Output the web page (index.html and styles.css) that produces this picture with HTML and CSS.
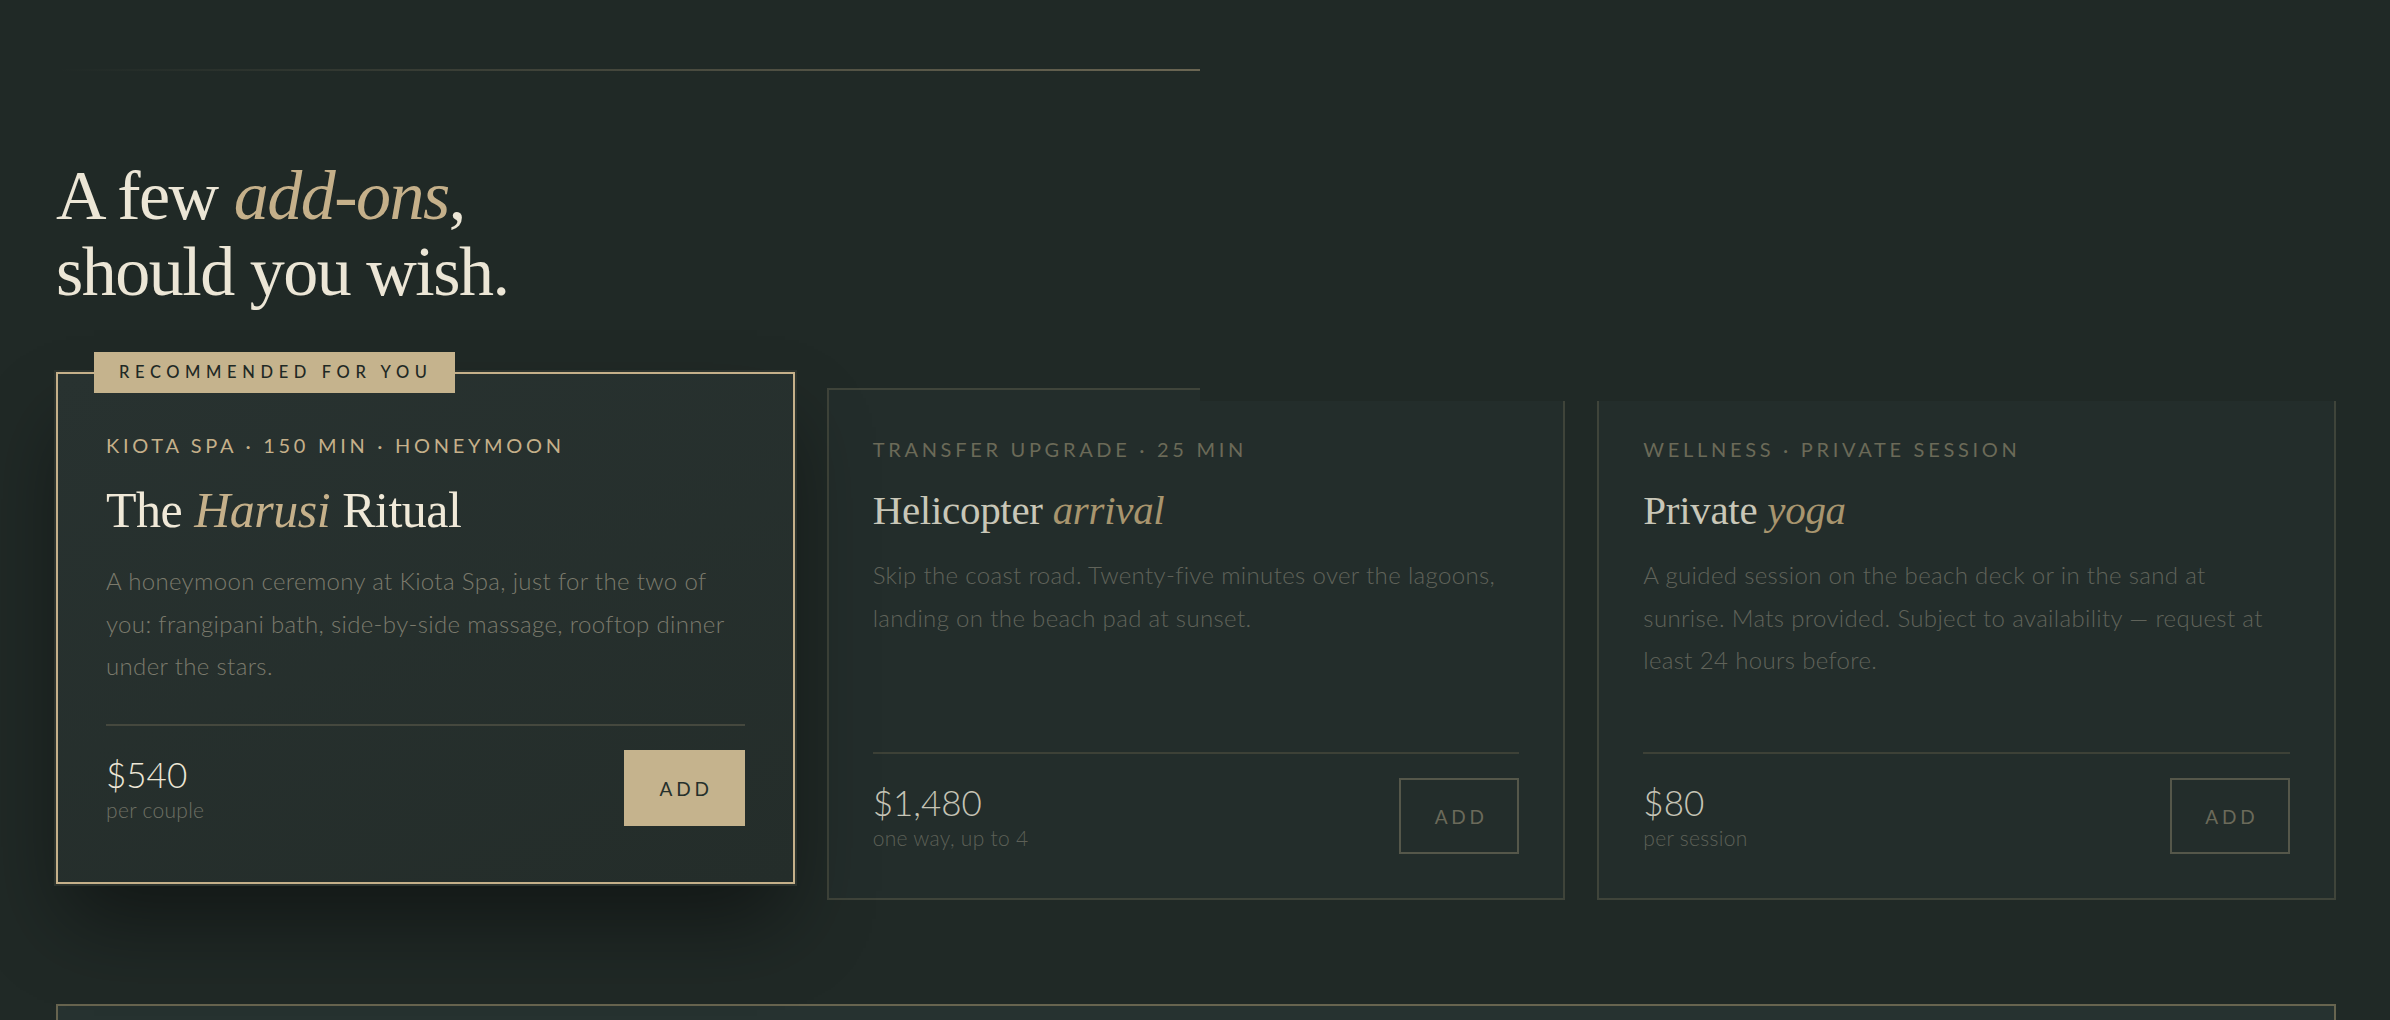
FILE: index.html
```html
<!DOCTYPE html>
<html lang="en">
<head>
<meta charset="utf-8">
<title>Add-ons</title>
<link rel="stylesheet" href="styles.css">
</head>
<body>
<main class="page">
  <div class="rule"></div>
  <h2 class="heading">A few <em>add-ons</em>,<br>should you wish.</h2>

  <div class="cards">
    <article class="card card--featured">
      <span class="badge">Recommended for you</span>
      <p class="meta">Kiota Spa · 150 min · Honeymoon</p>
      <h3 class="title">The <em>Harusi</em> Ritual</h3>
      <p class="desc">A honeymoon ceremony at Kiota Spa, just for the two of you: frangipani bath, side-by-side massage, rooftop dinner under the stars.</p>
      <div class="foot">
        <div class="price-block">
          <div class="price">$540</div>
          <div class="sub">per couple</div>
        </div>
        <button class="btn" type="button">Add</button>
      </div>
    </article>

    <article class="card">
      <p class="meta">Transfer upgrade · 25 min</p>
      <h3 class="title">Helicopter <em>arrival</em></h3>
      <p class="desc">Skip the coast road. Twenty-five minutes over the lagoons, landing on the beach pad at sunset.</p>
      <div class="foot">
        <div class="price-block">
          <div class="price">$1,480</div>
          <div class="sub">one way, up to 4</div>
        </div>
        <button class="btn" type="button">Add</button>
      </div>
    </article>

    <article class="card">
      <p class="meta">Wellness · Private session</p>
      <h3 class="title">Private <em>yoga</em></h3>
      <p class="desc">A guided session on the beach deck or in the sand at sunrise. Mats provided. Subject to availability — request at least 24 hours before.</p>
      <div class="foot">
        <div class="price-block">
          <div class="price">$80</div>
          <div class="sub">per session</div>
        </div>
        <button class="btn" type="button">Add</button>
      </div>
    </article>
  </div>

  <section class="next"></section>
</main>
<div class="mask"></div>
</body>
</html>
```

FILE: styles.css
```css
* {
  box-sizing: border-box;
  margin: 0;
  padding: 0;
}

html,
body {
  background: #202926;
}

body {
  position: relative;
  min-height: 1020px;
  overflow: hidden;
  font-family: "Lato", "Noto Sans", sans-serif;
  font-weight: 300;
  color: #ece6d6;
}

.page {
  padding: 0 54px 0 56px;
}

.rule {
  width: 1144px;
  height: 2px;
  margin-top: 69px;
  background: linear-gradient(90deg, rgba(197, 176, 138, 0) 0%, rgba(197, 176, 138, 0.45) 100%);
}

.heading {
  margin-top: 87px;
  font-family: "Liberation Serif", "DejaVu Serif", serif;
  font-weight: 400;
  font-size: 70px;
  line-height: 76px;
  letter-spacing: -1.5px;
  color: #ece6d6;
}

.heading em {
  font-style: italic;
  color: #c5b08a;
}

.cards {
  display: grid;
  grid-template-columns: repeat(3, 1fr);
  gap: 32px;
  margin-top: 78px;
  align-items: stretch;
}

.card {
  position: relative;
  display: flex;
  flex-direction: column;
  min-height: 512px;
  padding: 44px;
  border: 2px solid #3f443a;
  background: #232d2b;
}

.card--featured {
  padding: 56px 48px;
  border-color: #c5b08a;
  background: linear-gradient(160deg, #283230 0%, #242d2a 100%);
  transform: translateY(-16px);
  box-shadow: 0 0 0 2px #2c332e, 0 45px 80px -10px rgba(0, 0, 0, 0.45);
  z-index: 1;
}

.badge {
  position: absolute;
  top: -22px;
  left: 36px;
  height: 41px;
  padding: 0 22px 0 25px;
  background: #c5b38d;
  color: #1f2925;
  font-size: 16.5px;
  font-weight: 500;
  line-height: 41px;
  letter-spacing: 0.34em;
  text-transform: uppercase;
  white-space: nowrap;
}

.meta {
  font-size: 20px;
  line-height: 30px;
  font-weight: 400;
  letter-spacing: 0.185em;
  text-transform: uppercase;
  color: #6b6a58;
}

.card--featured .meta {
  color: #c5b08a;
}

.title {
  margin-top: 22px;
  font-family: "Liberation Serif", "DejaVu Serif", serif;
  font-weight: 400;
  font-size: 41px;
  line-height: 48px;
  letter-spacing: -0.3px;
  color: #c9c7b8;
}

.title em {
  font-style: italic;
  color: #a8956e;
}

.card--featured .title {
  margin-top: 21px;
  font-size: 50px;
  line-height: 58px;
  letter-spacing: -0.5px;
  color: #f0e9d8;
}

.card--featured .title em {
  color: #c5b08a;
}

.desc {
  margin-top: 20px;
  font-size: 24px;
  line-height: 42.5px;
  letter-spacing: 0.35px;
  color: #60635a;
}

.card--featured .desc {
  margin-top: 21px;
  color: #7b7a6c;
}

.foot {
  display: flex;
  justify-content: space-between;
  align-items: center;
  margin-top: auto;
  padding-top: 24px;
  border-top: 2px solid #3d4137;
}

.card--featured .foot {
  border-top-color: #45483e;
}

.price {
  font-size: 35px;
  line-height: 40px;
  color: #c6c4b6;
}

.card--featured .price {
  color: #ece6d6;
}

.sub {
  margin-top: 3px;
  font-size: 21px;
  line-height: 26px;
  letter-spacing: 0.3px;
  color: #5d6057;
}

.card--featured .sub {
  color: #6e6f64;
}

.btn {
  width: 120px;
  height: 76px;
  padding-left: 0.2em;
  border: 2px solid #55574a;
  background: transparent;
  color: #6b6a5a;
  font-family: "Lato", "Noto Sans", sans-serif;
  font-size: 19px;
  font-weight: 400;
  letter-spacing: 0.2em;
  text-transform: uppercase;
  cursor: pointer;
}

.card--featured .btn {
  width: 121px;
  border-color: #c5b38d;
  background: #c5b38d;
  color: #25302c;
}

.next {
  height: 200px;
  margin-top: 104px;
  border: 2px solid #67644f;
  background: #263230;
}

.mask {
  position: absolute;
  top: 0;
  left: 1200px;
  right: 0;
  height: 401px;
  background: #202926;
  z-index: 5;
}
```
